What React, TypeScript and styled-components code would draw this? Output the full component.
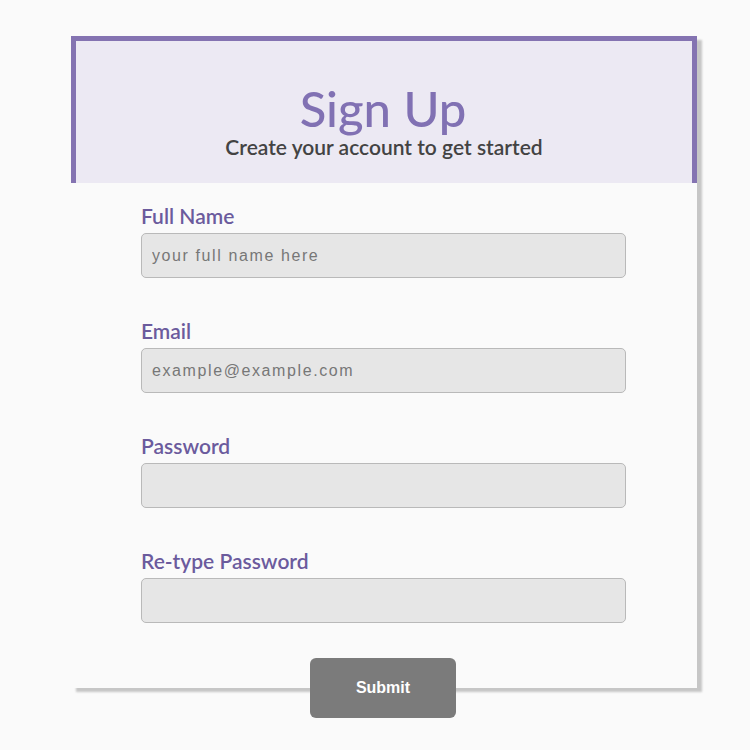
import React from 'react';
import styled, { createGlobalStyle } from 'styled-components';

const GlobalStyle = createGlobalStyle`
  html, body {
    margin: 0;
    padding: 0;
    background: #fafafa;
  }
  body {
    font-family: Lato, "Noto Sans", sans-serif;
  }
`;

const Page = styled.div`
  padding: 36px 0 0 71px;
  width: 750px;
  height: 750px;
  box-sizing: border-box;
`;

const Card = styled.div`
  width: 626px;
  background: #fafafa;
  box-shadow: 5px 4px 2px #c6c6c6;
`;

const Header = styled.header`
  height: 147px;
  box-sizing: border-box;
  border: 5px solid #8473b1;
  border-bottom: none;
  background: #ece9f3;
  display: flex;
  flex-direction: column;
  align-items: center;
  padding-top: 40px;
`;

const Title = styled.h1`
  margin: 0 2px 0 0;
  font-size: 49px;
  line-height: 54px;
  font-weight: 500;
  color: #8171b3;
`;

const Subtitle = styled.p`
  margin: 0;
  font-size: 21px;
  line-height: 24px;
  font-weight: 600;
  color: #434343;
`;

const Form = styled.form`
  display: flex;
  flex-direction: column;
  align-items: center;
  padding-top: 21px;
`;

const Fields = styled.div`
  display: flex;
  flex-direction: column;
  gap: 41px;
  width: 485px;
  margin-left: -1px;
`;

const Field = styled.label`
  display: flex;
  flex-direction: column;
  gap: 5px;
`;

const LabelText = styled.span`
  font-size: 21px;
  line-height: 24px;
  font-weight: 600;
  color: #6b5b9d;
`;

const Input = styled.input`
  height: 45px;
  box-sizing: border-box;
  border: 1px solid #b9b9b9;
  border-radius: 5px;
  background: #e6e6e6;
  padding: 0 10px;
  font-family: "Liberation Sans", Arial, sans-serif;
  font-size: 16px;
  letter-spacing: 1.6px;
  color: #333;
  outline: none;

  &::placeholder {
    color: #777;
  }
`;

const SubmitButton = styled.button`
  margin-top: 35px;
  margin-bottom: -30px;
  margin-right: 2px;
  width: 146px;
  height: 60px;
  border: none;
  border-radius: 6px;
  background: #7b7b7b;
  color: #fff;
  font-family: "Liberation Sans", Arial, sans-serif;
  font-size: 16px;
  font-weight: 700;
  cursor: pointer;
`;

const fields = [
  { label: 'Full Name', type: 'text', placeholder: 'your full name here' },
  { label: 'Email', type: 'email', placeholder: 'example@example.com' },
  { label: 'Password', type: 'password', placeholder: '' },
  { label: 'Re-type Password', type: 'password', placeholder: '' },
];

const App = () => {
  return (
    <>
      <GlobalStyle />
      <Page>
        <Card>
          <Header>
            <Title>Sign Up</Title>
            <Subtitle>Create your account to get started</Subtitle>
          </Header>
          <Form onSubmit={(e) => e.preventDefault()}>
            <Fields>
              {fields.map((f) => (
                <Field key={f.label}>
                  <LabelText>{f.label}</LabelText>
                  <Input type={f.type} placeholder={f.placeholder} />
                </Field>
              ))}
            </Fields>
            <SubmitButton type="submit">Submit</SubmitButton>
          </Form>
        </Card>
      </Page>
    </>
  );
};

export default App;
